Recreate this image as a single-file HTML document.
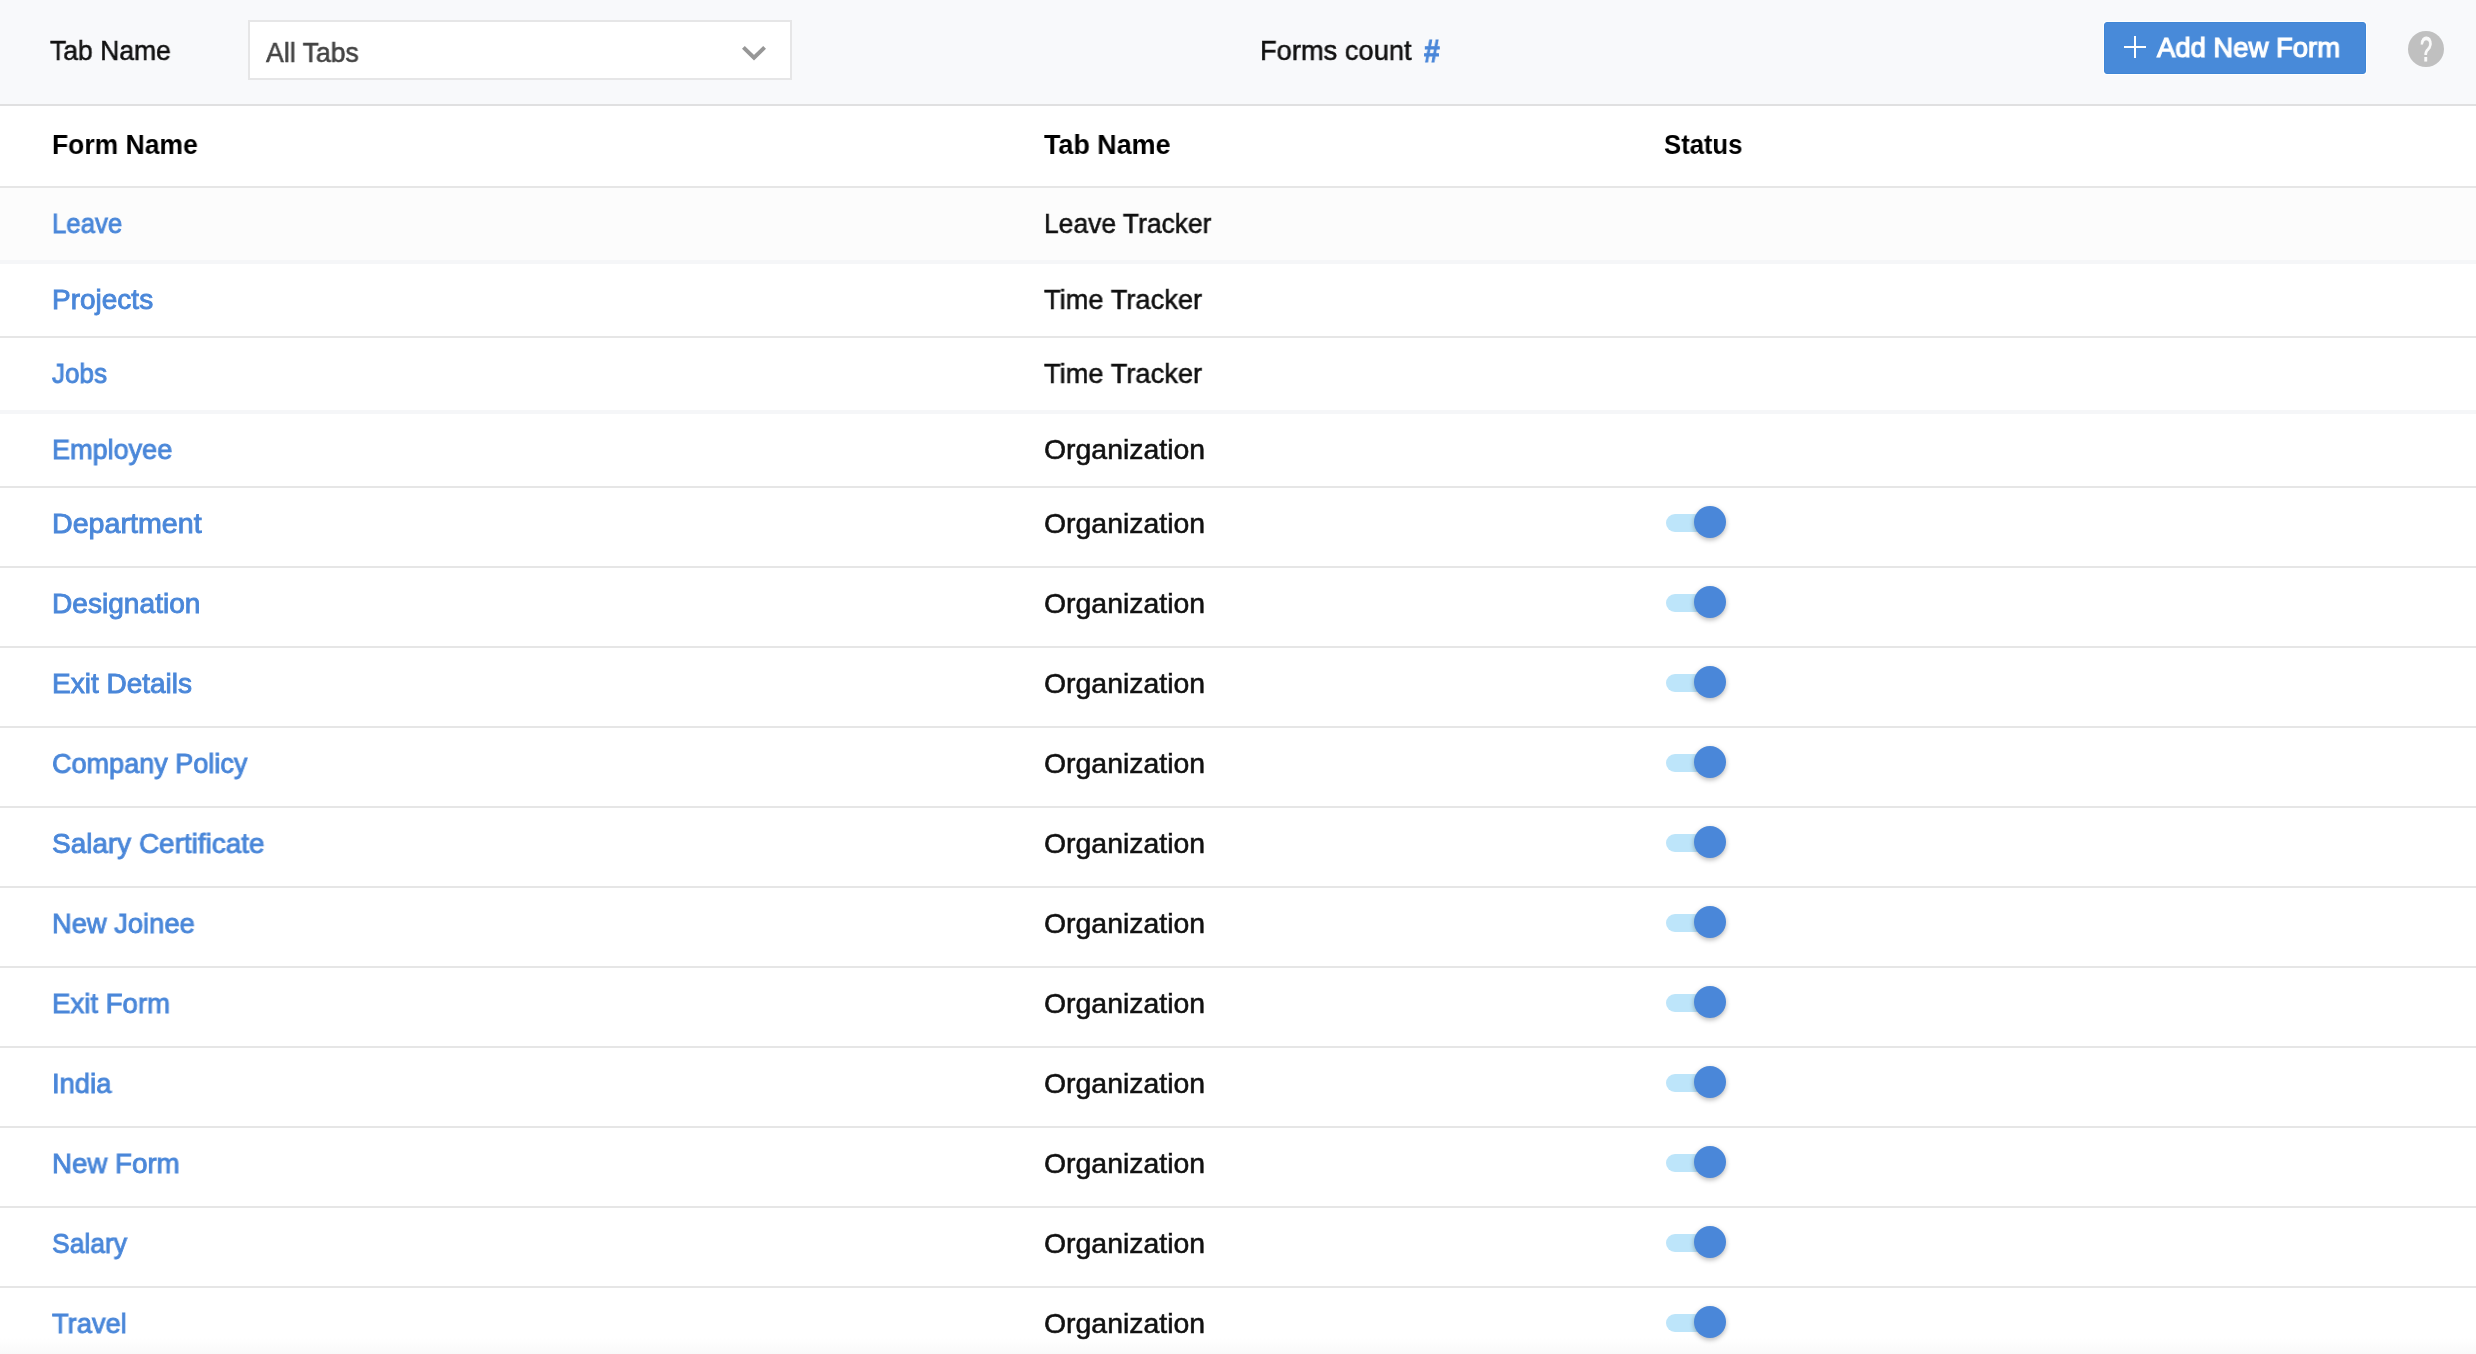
<!DOCTYPE html>
<html lang="en">
<head>
<meta charset="utf-8">
<title>Forms</title>
<style>
html,body{margin:0;padding:0}
html{width:2476px;height:1354px;overflow:hidden;background:#fff}
body{width:2476px;height:1354px;overflow:hidden;background:#fff;position:relative;font-family:'Liberation Sans', sans-serif}
#app{position:absolute;left:0;top:0;width:2476px;height:1354px;overflow:hidden;background:#fff}
.a{position:absolute}
.t{position:absolute;white-space:nowrap;line-height:80px;transform-origin:0 0;margin:0;will-change:transform;text-decoration:none}
.reg{font-size:28px;font-weight:400;-webkit-text-stroke:0.55px currentColor}
.lnk{font-size:28px;font-weight:400;-webkit-text-stroke:0.9px currentColor}
.hdr{font-size:27.2px;font-weight:700;-webkit-text-stroke:0px currentColor}
.btn{font-size:28px;font-weight:400;-webkit-text-stroke:1.2px currentColor}
.hash{font-size:32px;font-weight:700;-webkit-text-stroke:0.9px currentColor}
.q{font-size:35px;font-weight:400;-webkit-text-stroke:1.0px currentColor}
.ln{position:absolute;left:0;width:2476px;height:2px;background:#e6e6e6}
.lf{position:absolute;left:0;width:2476px;height:4px;background:#f5f6f8}
.trk{position:absolute;left:1666px;width:50px;height:18px;border-radius:9px;background:#bde5fa}
.knb{position:absolute;left:1694px;width:32px;height:32px;border-radius:50%;background:#4a87d9;box-shadow:0 2px 5px rgba(0,0,0,.28)}
</style>
</head>
<body>
<div id="app">
<header>
<div class="a" style="left:0;top:0;width:2476px;height:104px;background:#f8f9fb"></div>
<div class="ln" style="top:104px;background:#e0e0e1"></div>
<div class="t reg" style="left:50.21px;top:11px;color:#111;transform:scaleX(0.9469)">Tab Name</div>
<div class="a" style="left:248px;top:20px;width:544px;height:60px;box-sizing:border-box;border:2px solid #e6e6e7;background:#fff"></div>
<div class="t reg" style="left:266.36px;top:13px;color:#444;transform:scaleX(0.9513)">All Tabs</div>
<svg class="a" style="left:736px;top:40px" width="36" height="26" viewBox="0 0 36 26"><polyline points="7.4,7.4 18,17.6 28.6,7.4" fill="none" stroke="#979797" stroke-width="4" stroke-linecap="butt" stroke-linejoin="miter"/></svg>
<div class="t reg" style="left:1259.97px;top:11px;color:#111;transform:scaleX(0.9744)">Forms count</div>
<div class="t hash" style="left:1424.06px;top:10.59px;color:#4a87d9;transform:scale(0.8829,1.0014)">#</div>
<div class="a" style="left:2104px;top:22px;width:262px;height:52px;box-sizing:border-box;border:1px solid #3f86d6;border-radius:3px;background:#488ad9;box-shadow:0 0 0 1px #fff"></div>
<div class="a" style="left:2124px;top:45.6px;width:21.5px;height:2.3px;background:#fff"></div>
<div class="a" style="left:2133.55px;top:36px;width:2.3px;height:21.7px;background:#fff"></div>
<div class="t btn" style="left:2156.69px;top:8px;color:#fff;transform:scaleX(0.9801)">Add New Form</div>
<div class="a" style="left:2408px;top:31px;width:36px;height:36px;border-radius:50%;background:#c0c0c0"></div>
<div class="t q" style="left:2420.04px;top:8.27px;color:#fafafa;transform:scale(0.6236,1.0210)">?</div>
</header>
<main>
<section>
<div class="t hdr" style="left:51.88px;top:105px;color:#000;transform:scaleX(0.9745)">Form Name</div>
<div class="t hdr" style="left:1043.82px;top:105px;color:#000;transform:scaleX(0.9893)">Tab Name</div>
<div class="t hdr" style="left:1663.96px;top:105px;color:#000;transform:scaleX(0.9439)">Status</div>
<div class="ln" style="top:186px"></div>
</section>
<section>
<div class="a" style="left:0;top:188px;width:2476px;height:72px;background:#fcfcfc"></div>
<a class="t lnk" style="left:52.26px;top:184px;color:#4a87d9;transform:scaleX(0.9202)">Leave</a>
<div class="t reg" style="left:1044.02px;top:184px;color:#111;transform:scaleX(0.9440)">Leave Tracker</div>
<div class="lf" style="top:260px"></div>
</section>
<section>
<a class="t lnk" style="left:51.92px;top:260px;color:#4a87d9;transform:scaleX(0.9955)">Projects</a>
<div class="t reg" style="left:1044.12px;top:260px;color:#111;transform:scaleX(0.9740)">Time Tracker</div>
<div class="ln" style="top:336px"></div>
</section>
<section>
<a class="t lnk" style="left:52.38px;top:334px;color:#4a87d9;transform:scaleX(0.9287)">Jobs</a>
<div class="t reg" style="left:1044.12px;top:334px;color:#111;transform:scaleX(0.9740)">Time Tracker</div>
<div class="lf" style="top:410px"></div>
</section>
<section>
<a class="t lnk" style="left:51.98px;top:410px;color:#4a87d9;transform:scaleX(0.9658)">Employee</a>
<div class="t reg" style="left:1043.93px;top:410px;color:#111;transform:scaleX(1.0149)">Organization</div>
<div class="ln" style="top:486px"></div>
</section>
<section>
<a class="t lnk" style="left:51.88px;top:484px;color:#4a87d9;transform:scaleX(1.0225)">Department</a>
<div class="t reg" style="left:1043.93px;top:484px;color:#111;transform:scaleX(1.0149)">Organization</div>
<div class="trk" style="top:514px"></div><div class="knb" style="top:506px"></div>
<div class="ln" style="top:566px"></div>
</section>
<section>
<a class="t lnk" style="left:51.91px;top:564px;color:#4a87d9;transform:scaleX(1.0040)">Designation</a>
<div class="t reg" style="left:1043.93px;top:564px;color:#111;transform:scaleX(1.0149)">Organization</div>
<div class="trk" style="top:594px"></div><div class="knb" style="top:586px"></div>
<div class="ln" style="top:646px"></div>
</section>
<section>
<a class="t lnk" style="left:51.92px;top:644px;color:#4a87d9;transform:scaleX(0.9991)">Exit Details</a>
<div class="t reg" style="left:1043.93px;top:644px;color:#111;transform:scaleX(1.0149)">Organization</div>
<div class="trk" style="top:674px"></div><div class="knb" style="top:666px"></div>
<div class="ln" style="top:726px"></div>
</section>
<section>
<a class="t lnk" style="left:52.15px;top:724px;color:#4a87d9;transform:scaleX(0.9662)">Company Policy</a>
<div class="t reg" style="left:1043.93px;top:724px;color:#111;transform:scaleX(1.0149)">Organization</div>
<div class="trk" style="top:754px"></div><div class="knb" style="top:746px"></div>
<div class="ln" style="top:806px"></div>
</section>
<section>
<a class="t lnk" style="left:51.97px;top:804px;color:#4a87d9;transform:scaleX(0.9972)">Salary Certificate</a>
<div class="t reg" style="left:1043.93px;top:804px;color:#111;transform:scaleX(1.0149)">Organization</div>
<div class="trk" style="top:834px"></div><div class="knb" style="top:826px"></div>
<div class="ln" style="top:886px"></div>
</section>
<section>
<a class="t lnk" style="left:51.96px;top:884px;color:#4a87d9;transform:scaleX(0.9756)">New Joinee</a>
<div class="t reg" style="left:1043.93px;top:884px;color:#111;transform:scaleX(1.0149)">Organization</div>
<div class="trk" style="top:914px"></div><div class="knb" style="top:906px"></div>
<div class="ln" style="top:966px"></div>
</section>
<section>
<a class="t lnk" style="left:51.94px;top:964px;color:#4a87d9;transform:scaleX(0.9853)">Exit Form</a>
<div class="t reg" style="left:1043.93px;top:964px;color:#111;transform:scaleX(1.0149)">Organization</div>
<div class="trk" style="top:994px"></div><div class="knb" style="top:986px"></div>
<div class="ln" style="top:1046px"></div>
</section>
<section>
<a class="t lnk" style="left:52.41px;top:1044px;color:#4a87d9;transform:scaleX(0.9768)">India</a>
<div class="t reg" style="left:1043.93px;top:1044px;color:#111;transform:scaleX(1.0149)">Organization</div>
<div class="trk" style="top:1074px"></div><div class="knb" style="top:1066px"></div>
<div class="ln" style="top:1126px"></div>
</section>
<section>
<a class="t lnk" style="left:51.94px;top:1124px;color:#4a87d9;transform:scaleX(0.9885)">New Form</a>
<div class="t reg" style="left:1043.93px;top:1124px;color:#111;transform:scaleX(1.0149)">Organization</div>
<div class="trk" style="top:1154px"></div><div class="knb" style="top:1146px"></div>
<div class="ln" style="top:1206px"></div>
</section>
<section>
<a class="t lnk" style="left:51.82px;top:1204px;color:#4a87d9;transform:scaleX(0.9458)">Salary</a>
<div class="t reg" style="left:1043.93px;top:1204px;color:#111;transform:scaleX(1.0149)">Organization</div>
<div class="trk" style="top:1234px"></div><div class="knb" style="top:1226px"></div>
<div class="ln" style="top:1286px"></div>
</section>
<section>
<div class="a" style="left:0;top:1338px;width:2476px;height:16px;background:linear-gradient(#fff,#f9f9f9)"></div>
<a class="t lnk" style="left:51.76px;top:1284px;color:#4a87d9;transform:scaleX(0.9735)">Travel</a>
<div class="t reg" style="left:1043.93px;top:1284px;color:#111;transform:scaleX(1.0149)">Organization</div>
<div class="trk" style="top:1314px"></div><div class="knb" style="top:1306px"></div>
</section>
</main>
</div>
</body>
</html>
